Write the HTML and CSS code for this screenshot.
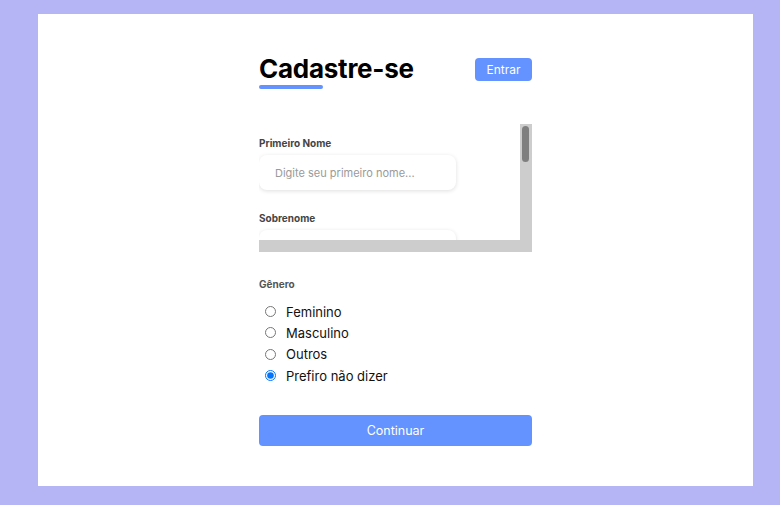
FILE: index.html
```html
<!DOCTYPE html>
<html lang="pt-BR">
<head>
<meta charset="utf-8">
<title>Cadastre-se</title>
<link rel="stylesheet" href="styles.css">
</head>
<body>
<div class="card">
  <form class="form">
    <div class="header">
      <div class="title-wrap">
        <h1 class="title">Cadastre-se</h1>
        <div class="title-bar"></div>
      </div>
      <button type="button" class="btn-login">Entrar</button>
    </div>

    <div class="scroll-box">
      <div class="scroll">
        <div class="field">
          <label class="label">Primeiro Nome</label>
          <input class="input" type="text" placeholder="Digite seu primeiro nome...">
        </div>
        <div class="field">
          <label class="label">Sobrenome</label>
          <input class="input" type="text" placeholder="Digite seu sobrenome...">
        </div>
        <div class="field">
          <label class="label">E-mail</label>
          <input class="input" type="text" placeholder="Digite seu e-mail...">
        </div>
        <div class="field">
          <label class="label">Celular</label>
          <input class="input" type="text" placeholder="(xx) xxxx-xxxx">
        </div>
        <div class="field">
          <label class="label">Senha</label>
          <input class="input" type="password" placeholder="Digite sua senha...">
        </div>
      </div>
      <div class="vbar"><div class="vthumb"></div></div>
      <div class="hbar"></div>
    </div>

    <div class="gender">
      <div class="label gender-title">Gênero</div>
      <label class="radio-row"><input type="radio" name="g" class="radio">Feminino</label>
      <label class="radio-row"><input type="radio" name="g" class="radio">Masculino</label>
      <label class="radio-row"><input type="radio" name="g" class="radio">Outros</label>
      <label class="radio-row"><input type="radio" name="g" class="radio" checked>Prefiro não dizer</label>
    </div>

    <button type="button" class="btn-continue">Continuar</button>
  </form>
</div>
</body>
</html>
```

FILE: styles.css
```css
* { box-sizing: border-box; }

html, body {
  margin: 0;
  padding: 0;
}

body {
  background: #b5b5f6;
  font-family: Inter, "Noto Sans", sans-serif;
  width: 780px;
  height: 505px;
  overflow: hidden;
}

.card {
  background: #ffffff;
  width: 715px;
  height: 472px;
  margin: 14px 0 0 38px;
  display: flex;
  justify-content: center;
}

.form {
  width: 273px;
  padding-top: 40px;
  display: flex;
  flex-direction: column;
}

.header {
  display: flex;
  justify-content: space-between;
  align-items: flex-start;
}

.title {
  margin: 0;
  font-size: 26px;
  line-height: 30px;
  font-weight: 700;
  color: #000;
  letter-spacing: -0.25px;
}

.title-bar {
  width: 64px;
  height: 4px;
  border-radius: 2px;
  background: #6492ff;
  margin-top: 1px;
}

.btn-login {
  margin-top: 4px;
  width: 57px;
  height: 23px;
  border: none;
  border-radius: 4px;
  background: #6492ff;
  color: #fff;
  font-family: Inter, sans-serif;
  font-size: 12px;
  padding: 0;
}

.scroll-box {
  margin-top: 35px;
  display: grid;
  grid-template-columns: 261px 12px;
  grid-template-rows: 116px 12px;
}

.scroll {
  overflow: hidden;
  padding-top: 13px;
}

.vbar {
  background: #cdcdcd;
  padding: 2px 3px 0 2px;
}

.vthumb {
  width: 7px;
  height: 36px;
  border-radius: 4px;
  background: #7f7f7f;
}

.hbar {
  grid-column: 1 / 3;
  background: #cdcdcd;
}

.field {
  margin-bottom: 22px;
}

.label {
  display: block;
  font-size: 10px;
  line-height: 12px;
  font-weight: 700;
  color: #444;
  margin-bottom: 6px;
}

.input {
  display: block;
  width: 197px;
  height: 35px;
  border: none;
  border-radius: 8px;
  background: #fff;
  box-shadow: 0 1px 4px rgba(0, 0, 0, 0.13);
  padding: 0 16px;
  font-family: Inter, sans-serif;
  font-size: 11px;
  outline: none;
}

.input::placeholder {
  color: #9a9a9a;
}

.gender {
  margin-top: 26px;
  display: flex;
  flex-direction: column;
}

.gender-title {
  margin-bottom: 11px;
  color: #555;
}

.radio-row {
  display: flex;
  align-items: center;
  height: 21.3px;
  font-size: 13px;
  color: #111;
}

.radio {
  margin: 0 10px 0 6px;
  width: 11px;
  height: 11px;
}

.btn-continue {
  margin-top: 29px;
  width: 273px;
  height: 31px;
  border: none;
  border-radius: 4px;
  background: #6492ff;
  color: #fff;
  font-family: Inter, sans-serif;
  font-size: 12.5px;
  padding: 0;
}
```
